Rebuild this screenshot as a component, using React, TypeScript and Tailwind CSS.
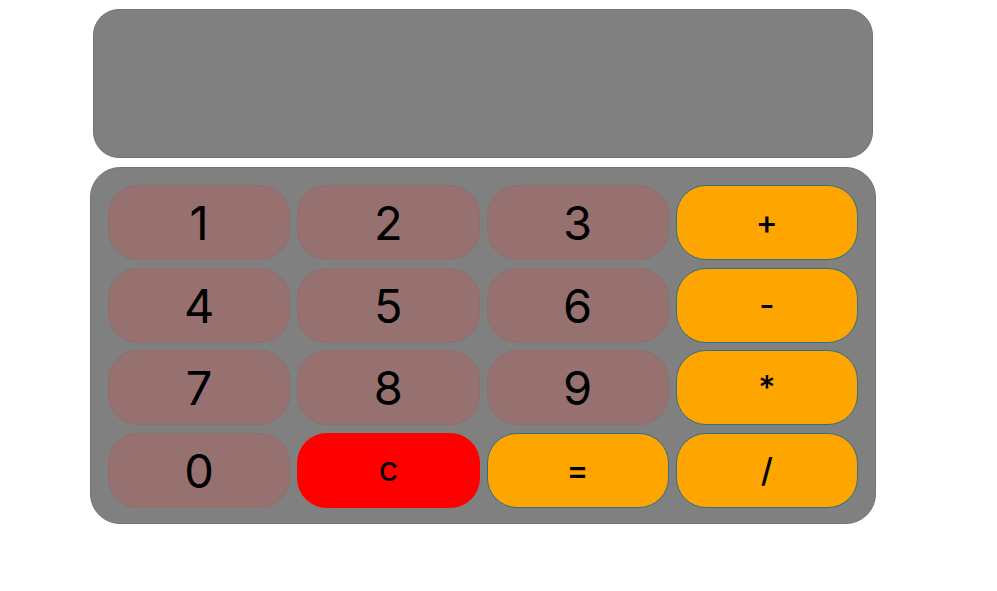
import React from "react";

type Key = { label: string; kind: "num" | "op" | "clear" };

const keys: Key[] = [
  { label: "1", kind: "num" },
  { label: "2", kind: "num" },
  { label: "3", kind: "num" },
  { label: "+", kind: "op" },
  { label: "4", kind: "num" },
  { label: "5", kind: "num" },
  { label: "6", kind: "num" },
  { label: "-", kind: "op" },
  { label: "7", kind: "num" },
  { label: "8", kind: "num" },
  { label: "9", kind: "num" },
  { label: "*", kind: "op" },
  { label: "0", kind: "num" },
  { label: "c", kind: "clear" },
  { label: "=", kind: "op" },
  { label: "/", kind: "op" },
];

function KeyButton({ k }: { k: Key }) {
  if (k.kind === "num") {
    return (
      <button className="h-[75px] rounded-[30px] bg-[#977070] border border-[#8f6e6e] text-[47px] leading-none text-black flex items-center justify-center">
        {k.label}
      </button>
    );
  }
  if (k.kind === "clear") {
    return (
      <button className="h-[75px] rounded-[30px] bg-[#ff0000] text-[34px] leading-none text-black flex items-center justify-center pb-[2px]">
        {k.label}
      </button>
    );
  }
  return (
    <button className="h-[75px] rounded-[30px] bg-[#ffa500] border border-[#2f6f86] text-[33px] font-medium leading-none text-black flex items-center justify-center">
      {k.label}
    </button>
  );
}

export default function App() {
  return (
    <div
      className="w-[997px] h-[591px] bg-white"
      style={{ fontFamily: "Inter, 'Open Sans', sans-serif" }}
    >
      <div className="pt-[9px] pl-[90px] w-[876px] flex flex-col gap-[9px]">
        <div className="ml-[3px] w-[780px] h-[149px] rounded-[26px] bg-[#808080] border border-[#747474]" />
        <div className="w-[786px] h-[357px] rounded-[30px] bg-[#808080] border border-[#747474] p-[17px]">
          <div className="grid grid-cols-4 gap-x-[7px] gap-y-[7.5px]">
            {keys.map((k) => (
              <KeyButton key={k.label} k={k} />
            ))}
          </div>
        </div>
      </div>
    </div>
  );
}
